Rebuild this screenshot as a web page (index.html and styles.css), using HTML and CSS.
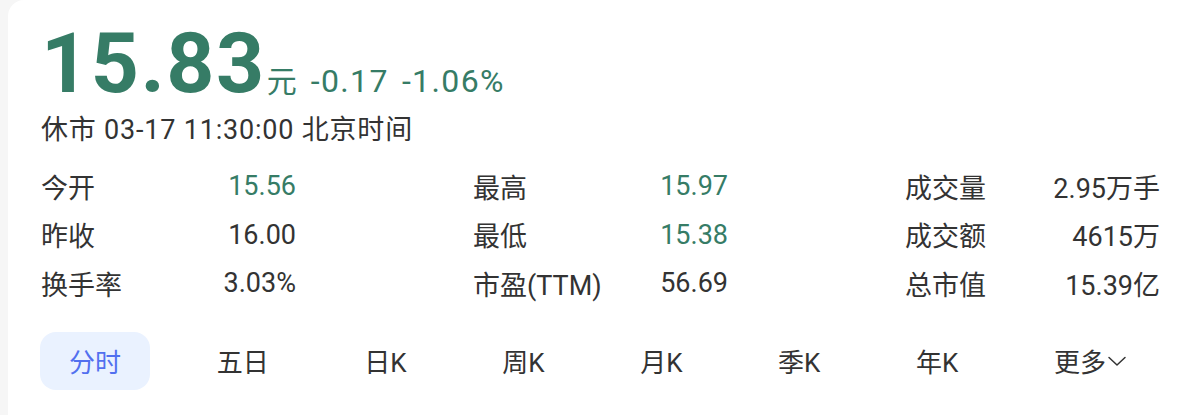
FILE: index.html
```html
<!DOCTYPE html>
<html lang="zh-CN">
<head>
<meta charset="utf-8">
<title>行情</title>
<link rel="stylesheet" href="styles.css">
</head>
<body>
<div class="card">
  <div class="quote">
    <span class="price">15.83</span>
    <span class="unit">元</span>
    <span class="change">-0.17</span>
    <span class="change">-1.06%</span>
  </div>
  <div class="time">休市 03-17 11:30:00 北京时间</div>
  <div class="stats">
    <div class="group">
      <div class="row"><span class="label">今开</span><span class="value down">15.56</span></div>
      <div class="row"><span class="label">昨收</span><span class="value">16.00</span></div>
      <div class="row"><span class="label">换手率</span><span class="value">3.03%</span></div>
    </div>
    <div class="group">
      <div class="row"><span class="label">最高</span><span class="value down">15.97</span></div>
      <div class="row"><span class="label">最低</span><span class="value down">15.38</span></div>
      <div class="row"><span class="label">市盈(TTM)</span><span class="value">56.69</span></div>
    </div>
    <div class="group">
      <div class="row"><span class="label">成交量</span><span class="value">2.95万手</span></div>
      <div class="row"><span class="label">成交额</span><span class="value">4615万</span></div>
      <div class="row"><span class="label">总市值</span><span class="value">15.39亿</span></div>
    </div>
  </div>
  <div class="tabs">
    <div class="tab active">分时</div>
    <div class="tab">五日</div>
    <div class="tab">日K</div>
    <div class="tab">周K</div>
    <div class="tab">月K</div>
    <div class="tab">季K</div>
    <div class="tab">年K</div>
    <div class="tab more">更多<svg class="chev" width="20" height="14" viewBox="0 0 20 14"><path d="M2 3.5 L10 11 L18 3.5" fill="none" stroke="#333" stroke-width="1.5" stroke-linecap="round" stroke-linejoin="round"/></svg></div>
  </div>
</div>
</body>
</html>
```
FILE: styles.css
```css
html, body {
  margin: 0;
  padding: 0;
  background: #f6f6f6;
}
body {
  padding-left: 8px;
  height: 415px;
  overflow: hidden;
  font-family: Roboto, "Noto Sans CJK SC", sans-serif;
  color: #333333;
}
.card {
  background: #ffffff;
  border-radius: 16px 0 0 0;
  height: 415px;
  box-sizing: border-box;
  padding: 22px 22px 0 32px;
}
.quote {
  display: flex;
  align-items: baseline;
  color: #367c66;
  line-height: 84px;
  height: 84px;
}
.price {
  font-family: Roboto, sans-serif;
  font-weight: 700;
  font-size: 84px;
  letter-spacing: 1.5px;
  margin-left: 1px;
}
.unit {
  font-family: "Noto Sans CJK SC", sans-serif;
  font-size: 30px;
  margin-left: 1px;
  margin-right: 14px;
}
.change {
  font-family: Roboto, sans-serif;
  font-size: 32px;
  letter-spacing: 1.4px;
  margin-right: 13px;
}
.time {
  margin-top: 7px;
  font-family: Roboto, "Noto Sans CJK SC", sans-serif;
  font-size: 27px;
  letter-spacing: 0.8px;
  line-height: 34px;
  color: #333333;
  padding-left: 1px;
}
.stats {
  margin-top: 15px;
  display: flex;
  justify-content: space-between;
}
.group {
  width: 256px;
}
.row {
  display: flex;
  justify-content: space-between;
  align-items: center;
  height: 48.5px;
  padding-left: 1px;
}
.label {
  font-family: Roboto, "Noto Sans CJK SC", sans-serif;
  font-size: 27px;
  color: #333333;
}
.value {
  font-family: Roboto, "Noto Sans CJK SC", sans-serif;
  font-size: 27px;
  color: #333333;
}
.value.down {
  color: #367c66;
}
.tabs {
  margin-top: 24px;
  display: flex;
  justify-content: space-between;
  align-items: center;
}
.tab {
  height: 58px;
  padding: 0 29px;
  border-radius: 16px;
  display: flex;
  align-items: center;
  font-family: Roboto, "Noto Sans CJK SC", sans-serif;
  font-size: 26px;
  color: #333333;
}
.tab.active {
  background: #eaf2ff;
  color: #5270ef;
}
.tab.more {
  padding-right: 33px;
}
.chev {
  margin-left: 1px;
}
```
